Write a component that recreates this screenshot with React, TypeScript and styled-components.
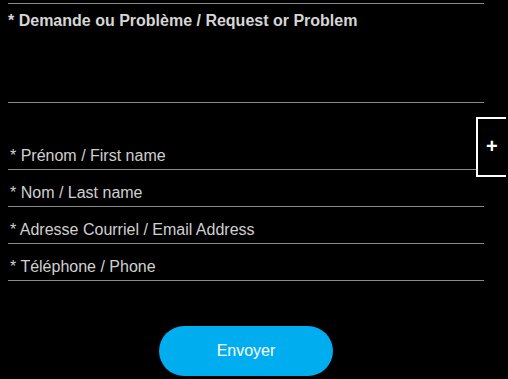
import React from 'react';
import styled, { createGlobalStyle } from 'styled-components';

const GlobalStyle = createGlobalStyle`
  html, body {
    margin: 0;
    padding: 0;
    background: #000;
    font-family: 'Liberation Sans', Arial, sans-serif;
    overflow: hidden;
  }
`;

const Form = styled.form`
  display: flex;
  flex-direction: column;
  padding: 3px 24px 0 8px;
  width: 476px;
`;

const MessageBlock = styled.div`
  height: 100px;
  box-sizing: border-box;
  border-top: 1px solid #8a8a8a;
  border-bottom: 1px solid #8a8a8a;
  padding-top: 7px;
`;

const MessageLabel = styled.label`
  display: block;
  font-size: 16px;
  line-height: 20px;
  font-weight: bold;
  color: #d6d6d6;
`;

const Fields = styled.div`
  display: flex;
  flex-direction: column;
  margin-top: 30px;
`;

const Field = styled.div`
  height: 37px;
  box-sizing: border-box;
  padding-top: 13px;
  border-bottom: 1px solid #8a8a8a;
`;

const FieldLabel = styled.label`
  display: block;
  padding-left: 2px;
  font-size: 16px;
  line-height: 20px;
  color: #d0d0d0;
`;

const Actions = styled.div`
  display: flex;
  justify-content: center;
  margin-top: 45px;
`;

const SubmitButton = styled.button`
  width: 174px;
  height: 50px;
  border: none;
  border-radius: 25px;
  background: #00aeef;
  color: #fff;
  font-family: 'Liberation Sans', Arial, sans-serif;
  font-size: 16px;
  cursor: pointer;
`;

const SideToggle = styled.button`
  position: fixed;
  top: 117px;
  left: 476px;
  width: 30px;
  height: 60px;
  box-sizing: border-box;
  background: #000;
  border: 2px solid #fff;
  border-right: none;
  color: #fff;
  font-family: 'Liberation Sans', Arial, sans-serif;
  font-size: 20px;
  font-weight: bold;
  padding: 0 0 2px 8px;
  text-align: left;
  cursor: pointer;
`;

const fields = [
  '* Prénom / First name',
  '* Nom / Last name',
  '* Adresse Courriel / Email Address',
  '* Téléphone / Phone',
];

export default function App() {
  return (
    <>
      <GlobalStyle />
      <Form onSubmit={(e) => e.preventDefault()}>
        <MessageBlock>
          <MessageLabel>* Demande ou Problème / Request or Problem</MessageLabel>
        </MessageBlock>
        <Fields>
          {fields.map((label) => (
            <Field key={label}>
              <FieldLabel>{label}</FieldLabel>
            </Field>
          ))}
        </Fields>
        <Actions>
          <SubmitButton type="submit">Envoyer</SubmitButton>
        </Actions>
      </Form>
      <SideToggle type="button">+</SideToggle>
    </>
  );
}
